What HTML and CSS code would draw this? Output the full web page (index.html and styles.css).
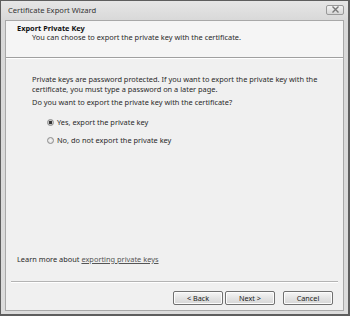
FILE: index.html
```html
<!DOCTYPE html>
<html lang="en">
<head>
  <meta charset="UTF-8">
  <title>Certificate Export Wizard</title>
  <link rel="stylesheet" href="styles.css">
</head>
<body>
  <div class="window">
    <div class="titlebar">
      <span class="title">Certificate Export Wizard</span>
      <span class="close">
        <svg width="9" height="7" viewBox="0 0 9 7"><path d="M1.5 0.5 L7.5 6.5 M7.5 0.5 L1.5 6.5" stroke="#777" stroke-width="1.4"/></svg>
      </span>
    </div>
    <div class="client">
      <div class="header">
        <div class="heading">Export Private Key</div>
        <div class="subheading">You can choose to export the private key with the certificate.</div>
      </div>
      <div class="body">
        <p>Private keys are password protected. If you want to export the private key with the certificate, you must type a password on a later page.</p>
        <p>Do you want to export the private key with the certificate?</p>
        <label class="option"><span class="radio checked"></span>Yes, export the private key</label>
        <label class="option"><span class="radio"></span>No, do not export the private key</label>
        <div class="learn">Learn more about <a href="#">exporting private keys</a></div>
      </div>
      <div class="footer">
        <button class="btn">&lt; Back</button>
        <button class="btn">Next &gt;</button>
        <button class="btn cancel">Cancel</button>
      </div>
    </div>
  </div>
</body>
</html>
```

FILE: styles.css
```css
html, body {
  margin: 0;
  padding: 0;
}
body {
  width: 350px;
  height: 316px;
  font-family: "Noto Sans", "Open Sans", sans-serif;
  font-size: 7.4px;
  color: #2a2a2a;
  background: #fff;
}
.window {
  box-sizing: border-box;
  width: 350px;
  height: 316px;
  display: flex;
  flex-direction: column;
  background: linear-gradient(#e6e6e6, #d8d8d8 20px, #dcdcdc);
  border: 1px solid #5e5e5e;
  border-bottom-width: 2px;
  border-right-width: 2px;
  padding: 0 4px 3px 4px;
}
.titlebar {
  height: 19px;
  display: flex;
  align-items: center;
  justify-content: space-between;
  flex-shrink: 0;
}
.title {
  font-size: 7.6px;
  color: #333;
  padding-left: 3px;
  margin-top: -2px;
}
.close {
  width: 18px;
  height: 10px;
  box-sizing: border-box;
  border: 1px solid #999;
  border-radius: 2px;
  background: linear-gradient(#f2f2f2, #d6d6d6);
  display: flex;
  align-items: center;
  justify-content: center;
  margin-right: 0;
  margin-top: -2px;
}
.client {
  flex: 1;
  display: flex;
  flex-direction: column;
  background: #f0f0f0;
  border: 1px solid #a8a8a8;
}
.header {
  height: 37px;
  box-sizing: border-box;
  background: #f5f5f5;
  border-bottom: 1px solid #a0a0a0;
  box-shadow: 0 1px 0 #fff;
  padding: 3px 0 0 11px;
  line-height: 9px;
}
.heading {
  font-weight: bold;
  color: #111;
}
.subheading {
  padding-left: 15px;
}
.body {
  flex: 1;
  display: flex;
  flex-direction: column;
  padding: 16px 20px 0 26px;
  line-height: 10px;
}
.body p {
  margin: 0 0 3px 0;
}
.option {
  display: flex;
  align-items: center;
  margin: 7px 0 0 15px;
  height: 10px;
}
.option + .option {
  margin-top: 8px;
}
.radio {
  width: 7px;
  height: 7px;
  box-sizing: border-box;
  border: 1px solid #8c8c8c;
  border-radius: 50%;
  background: radial-gradient(#f8f8f8, #d4d4d4);
  margin-right: 3px;
}
.radio.checked {
  background: radial-gradient(#333 0 1.4px, #c8c8c8 1.8px);
}
.learn {
  margin-top: auto;
  margin-left: -15px;
  margin-bottom: 17px;
}
.learn a {
  color: #555;
}
.footer {
  height: 29px;
  box-sizing: border-box;
  border-top: 1px solid #b4b4b4;
  box-shadow: inset 0 1px 0 #fff;
  display: flex;
  justify-content: flex-end;
  align-items: flex-start;
  gap: 2px;
  padding: 9px 5px 0 0;
  margin: 0 5px 0 5px;
}
.btn {
  width: 50px;
  height: 14px;
  font-family: inherit;
  font-size: 7.25px;
  color: #222;
  border: 1px solid #707070;
  border-radius: 2px;
  background: linear-gradient(#f6f6f6, #e4e4e4 50%, #d6d6d6);
  box-shadow: inset 0 0 0 1px #fcfcfc;
  padding: 0;
}
.btn.cancel {
  margin-left: 6px;
}
```
